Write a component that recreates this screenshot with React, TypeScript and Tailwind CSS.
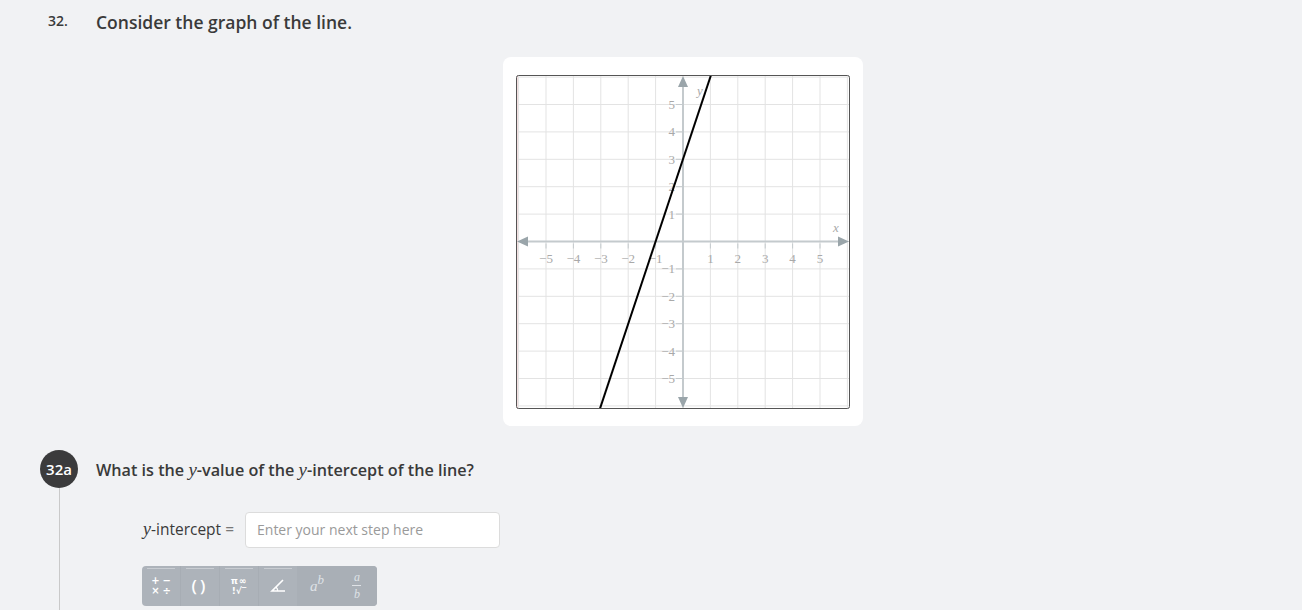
const S = 334;
const U = 27.4;
const CX = 167;
const CY = 166.5;
const px = (x: number) => CX + x * U;
const py = (y: number) => CY - y * U;

const ticks = [-6, -5, -4, -3, -2, -1, 0, 1, 2, 3, 4, 5, 6];
const labels = [-5, -4, -3, -2, -1, 1, 2, 3, 4, 5];

function Graph() {
  const axis = "#9aa5aa";
  const serif = { fontFamily: '"Liberation Serif", serif', fontSize: 13 };
  return (
    <svg width={S} height={S} className="block">
      <rect x={0} y={0} width={S} height={S} fill="#fff" />
      {ticks.map((t) => (
        <g key={t}>
          <line x1={px(t)} y1={0} x2={px(t)} y2={S} stroke="#e3e3e3" strokeWidth={1} />
          <line x1={0} y1={py(t)} x2={S} y2={py(t)} stroke="#e3e3e3" strokeWidth={1} />
        </g>
      ))}
      <line x1={1.5} y1={0} x2={1.5} y2={S} stroke="#f3dede" strokeWidth={1} />

      {/* axes */}
      <line x1={8} y1={CY} x2={S - 8} y2={CY} stroke="#c4cacd" strokeWidth={2} />
      <line x1={CX} y1={8} x2={CX} y2={S - 8} stroke="#c4cacd" strokeWidth={2} />
      <polygon points={`1,${CY} 12,${CY - 5} 12,${CY + 5}`} fill={axis} />
      <polygon points={`${S - 1},${CY} ${S - 12},${CY - 5} ${S - 12},${CY + 5}`} fill={axis} />
      <polygon points={`${CX},1 ${CX - 5},12 ${CX + 5},12`} fill={axis} />
      <polygon points={`${CX},${S - 1} ${CX - 5},${S - 12} ${CX + 5},${S - 12}`} fill={axis} />

      {labels.map((n) => (
        <g key={n} fill="#a9a9a9" style={serif}>
          <line x1={px(n)} y1={CY + 2} x2={px(n)} y2={CY + 7} stroke="#c4cacd" strokeWidth={1} />
          <text x={px(n)} y={CY + 21} textAnchor="middle">
            {n < 0 ? `\u2212${-n}` : n}
          </text>
          <line x1={CX - 7} y1={py(n)} x2={CX - 1} y2={py(n)} stroke="#c4cacd" strokeWidth={1} />
          <text x={CX - 8} y={py(n) + 4.5} textAnchor="end">
            {n < 0 ? `\u2212${-n}` : n}
          </text>
        </g>
      ))}
      <text x={317} y={157} fill="#a9a9a9" style={{ ...serif, fontStyle: "italic" }}>
        x
      </text>
      <text x={181} y={20} fill="#a9a9a9" style={{ ...serif, fontStyle: "italic" }}>
        y
      </text>

      <line x1={px(-3.03)} y1={py(-6.1)} x2={px(1.03)} y2={py(6.1)} stroke="#000" strokeWidth={2} />
      <rect x={0.5} y={0.5} width={S - 1} height={S - 1} fill="none" stroke="#555" strokeWidth={1} rx={2} />
    </svg>
  );
}

function ToolButton({ children, bar = true }: { children: React.ReactNode; bar?: boolean }) {
  return (
    <div className="relative flex h-full w-[40px] items-center justify-center">
      {bar && <div className="absolute left-[5px] right-[5px] top-[2px] h-[1px] bg-[#c9cdd2]" />}
      {children}
    </div>
  );
}

function Toolbar() {
  return (
    <div className="flex h-[40px] w-[235px] overflow-hidden rounded-[4px] bg-[#adb3ba] text-white">
      <ToolButton>
        <div className="grid grid-cols-2 gap-x-[3px] font-['DejaVu_Sans',sans-serif] text-[10px] font-bold leading-[10px]">
          <span>+</span>
          <span>−</span>
          <span>×</span>
          <span>÷</span>
        </div>
      </ToolButton>
      <div className="w-px bg-[#a7adb4]" />
      <ToolButton>
        <span className="text-[17px] font-semibold tracking-[3px]">()</span>
      </ToolButton>
      <div className="w-px bg-[#a7adb4]" />
      <ToolButton>
        <div className="flex flex-col items-center font-['DejaVu_Sans',sans-serif] text-[9px] font-bold leading-[10px]">
          <span className="tracking-[1px]">π∞</span>
          <span>!√‾</span>
        </div>
      </ToolButton>
      <div className="w-px bg-[#a7adb4]" />
      <ToolButton>
        <svg width="16" height="14" viewBox="0 0 16 14">
          <path d="M13 1 L2 12 H15" fill="none" stroke="#fff" strokeWidth="1.6" />
          <path d="M6 8 Q8 10 7.5 12" fill="none" stroke="#fff" strokeWidth="1.2" />
        </svg>
      </ToolButton>
      <div className="flex flex-1 items-center bg-[#a9afb6]">
        <div className="flex w-[40px] justify-center">
          <span className="font-['Liberation_Serif',serif] text-[15px] italic text-[#dfe2e6]">
            a<sup className="text-[13px]">b</sup>
          </span>
        </div>
        <div className="flex w-[40px] justify-center">
          <div className="flex flex-col items-center font-['Liberation_Serif',serif] text-[12px] italic leading-[12px] text-[#dfe2e6]">
            <span>a</span>
            <span className="my-[2px] h-px w-[9px] bg-[#dfe2e6]" />
            <span>b</span>
          </div>
        </div>
      </div>
    </div>
  );
}

export default function App() {
  return (
    <div className="min-h-[610px] overflow-hidden bg-[#f1f2f4] font-['Open_Sans',sans-serif] text-[#3a3a3a]">
      <div className="flex items-start pl-[48px] pt-[9px]">
        <span className="w-[48px] pt-[1px] text-[14px] font-semibold">32.</span>
        <h1 className="text-[17.5px] font-semibold">Consider the graph of the line.</h1>
      </div>

      <div className="ml-[96px] mr-[33px] mt-[22px] flex justify-center">
        <div className="rounded-[8px] bg-white px-[13px] pb-[17px] pt-[18px]">
          <Graph />
        </div>
      </div>

      <div className="mt-[24px] flex pl-[40px]">
        <div className="flex w-[38px] flex-col items-center">
          <div className="flex h-[38px] w-[38px] items-center justify-center rounded-full bg-[#3b3b3c] text-[15px] font-semibold text-white">
            32a
          </div>
          <div className="h-[140px] w-px bg-[#c9c9c9]" />
        </div>
        <div className="ml-[18px] flex-1">
          <p className="mt-[6px] text-[16.2px] font-semibold">
            What is the <span className="font-['Liberation_Serif',serif] text-[19px] font-normal italic">y</span>-value of the{" "}
            <span className="font-['Liberation_Serif',serif] text-[19px] font-normal italic">y</span>-intercept of the line?
          </p>
          <div className="ml-[47px] mt-[27px] flex items-center">
            <span className="text-[15.5px]">
              <span className="font-['Liberation_Serif',serif] text-[18px] italic">y</span>-intercept{" "}
              <span className="text-[#777]">=</span>
            </span>
            <div className="ml-[11px] flex h-[36px] w-[255px] items-center rounded-[4px] border border-[#dcdcdc] bg-white px-[11px] text-[14px] text-[#9a9a9a]">
              Enter your next step here
            </div>
          </div>
          <div className="ml-[46px] mt-[18px]">
            <Toolbar />
          </div>
        </div>
      </div>
    </div>
  );
}
